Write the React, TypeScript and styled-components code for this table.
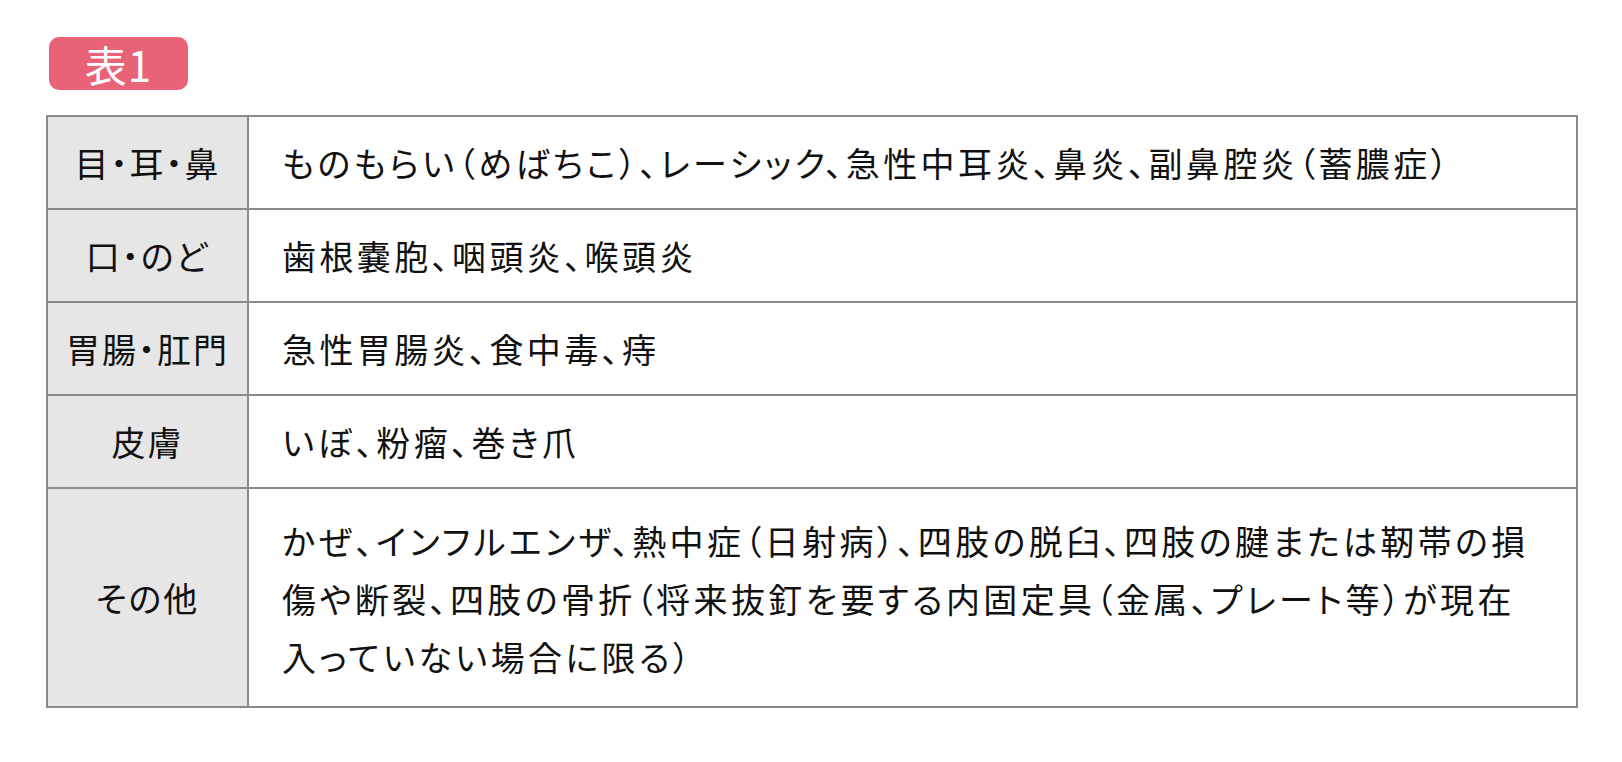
import styled, { createGlobalStyle } from 'styled-components'

const GlobalStyle = createGlobalStyle`
  body {
    margin: 0;
    background: #ffffff;
    font-family: "Noto Sans CJK JP", "Noto Sans", sans-serif;
    color: #111111;
  }
`

type Row = {
  label: string
  lines: string[]
  tall?: boolean
}

const rows: Row[] = [
  {
    label: '目・耳・鼻',
    lines: ['ものもらい（めばちこ）、レーシック、急性中耳炎、鼻炎、副鼻腔炎（蓄膿症）'],
  },
  { label: '口・のど', lines: ['歯根嚢胞、咽頭炎、喉頭炎'] },
  { label: '胃腸・肛門', lines: ['急性胃腸炎、食中毒、痔'] },
  { label: '皮膚', lines: ['いぼ、粉瘤、巻き爪'] },
  {
    label: 'その他',
    lines: [
      'かぜ、インフルエンザ、熱中症（日射病）、四肢の脱臼、四肢の腱または靭帯の損',
      '傷や断裂、四肢の骨折（将来抜釘を要する内固定具（金属、プレート等）が現在',
      '入っていない場合に限る）',
    ],
    tall: true,
  },
]

const App = () => {
  return (
    <Page>
      <GlobalStyle />
      <Badge>表1</Badge>
      <Table>
        <tbody>
          {rows.map((row) => (
            <tr key={row.label}>
              <Label>{row.label}</Label>
              <Cell $tall={row.tall}>
                {row.lines.map((line, i) => (
                  <Line key={i}>{line}</Line>
                ))}
              </Cell>
            </tr>
          ))}
        </tbody>
      </Table>
    </Page>
  )
}

export default App

const Page = styled.div`
  padding: 37px 44px 0 46px;
  display: flex;
  flex-direction: column;
  align-items: flex-start;
`

const Badge = styled.div`
  margin-left: 3px;
  width: 139px;
  height: 53px;
  border-radius: 10px;
  background: #e96378;
  color: #ffffff;
  font-size: 42px;
  line-height: 53px;
  text-align: center;
  letter-spacing: 1px;
`

const Table = styled.table`
  margin-top: 25px;
  width: 1532px;
  border-collapse: collapse;
  border: 2px solid #8a8a8a;
  font-size: 34px;
  font-weight: 400;
`

const Label = styled.th`
  width: 199px;
  padding: 0;
  background: #e6e6e6;
  border: 2px solid #8a8a8a;
  font-weight: 400;
  text-align: center;
  vertical-align: middle;
  line-height: 58px;
  letter-spacing: 2px;
  font-feature-settings: 'palt';
`

const Cell = styled.td<{ $tall?: boolean }>`
  padding: ${(p) => (p.$tall ? '23px 20px 20px 33px' : '17px 20px 16px 33px')};
  border: 2px solid #8a8a8a;
  line-height: 58px;
  letter-spacing: 3.4px;
  font-feature-settings: 'palt';
`

const Line = styled.div`
  white-space: nowrap;
`
